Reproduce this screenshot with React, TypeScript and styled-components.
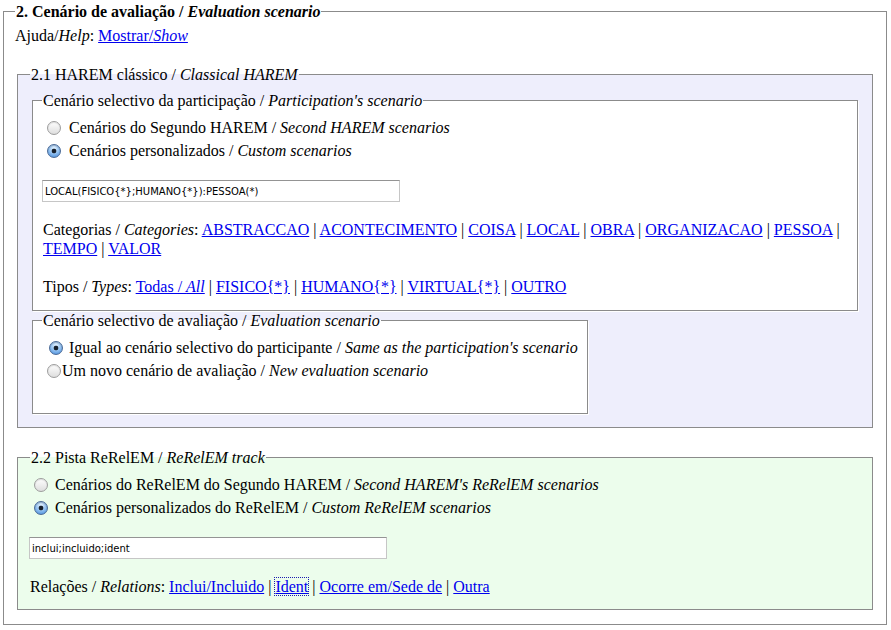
import React from 'react';
import styled, { createGlobalStyle, css } from 'styled-components';

const GlobalStyle = createGlobalStyle`
  html, body { margin: 0; padding: 0; background: #ffffff; }
  body {
    font-family: "Liberation Serif", "Times New Roman", serif;
    font-size: 16px;
    line-height: 19px;
    color: #000;
  }
`;

const BaseFieldset = styled.fieldset`
  margin: 0 2px;
  border: 1px solid #8b8b8b;
  box-shadow: 1px 1px 0 #ffffff;
  min-width: 0;
`;

const OuterFieldset = styled(BaseFieldset)`
  margin: 2px 4px 0 3px;
  padding: 5px 11px 14px 11px;
  background: #ffffff;
`;

const SectionFieldset = styled(BaseFieldset)<{ $bg: string }>`
  margin-top: 20px;
  padding: 6px 12px 13px 12px;
  background: ${(p) => p.$bg};
`;

const ScenarioFieldset = styled(BaseFieldset)<{ $fit?: boolean; $bottom: number }>`
  padding: 6px 9px ${(p) => p.$bottom}px 9px;
  background: #ffffff;
  &:first-of-type {
    margin-top: 1px;
  }
  ${(p) =>
    p.$fit &&
    css`
      width: fit-content;
    `}
`;

const Caption = styled.legend<{ $bold?: boolean }>`
  padding: 0 1px;
  font-weight: ${(p) => (p.$bold ? 700 : 400)};
  white-space: nowrap;
`;

const Em = styled.i`
  font-style: italic;
`;

const HelpLine = styled.div`
  margin: 0;
`;

const Link = styled.a<{ $focused?: boolean }>`
  color: #0000ee;
  text-decoration: underline;
  ${(p) =>
    p.$focused &&
    css`
      outline: 1px dotted #1c1cb0;
      outline-offset: 0;
    `}
`;

const Choice = styled.label`
  display: flex;
  align-items: center;
  height: 23px;
  white-space: nowrap;
`;

const Radio = styled.input.attrs({ type: 'radio' })<{ $ml?: number; $mr?: number }>`
  appearance: none;
  -webkit-appearance: none;
  box-sizing: border-box;
  flex: none;
  width: 14px;
  height: 14px;
  margin: 1px ${(p) => p.$mr ?? 7}px 0 ${(p) => p.$ml ?? 5}px;
  border-radius: 50%;
  border: 1px solid #9d9d9d;
  background: linear-gradient(#fefefe, #dedede);
  box-shadow: inset 0 1px 1px rgba(0, 0, 0, 0.12);
  &:checked {
    border-color: #4a6a97;
    background:
      radial-gradient(circle at 50% 50%, #17202c 0 2px, transparent 2.7px),
      radial-gradient(circle at 50% 25%, #e2f1ff 0, #9cc8f4 45%, #3f86d8 100%);
    box-shadow: inset 0 1px 1px rgba(0, 0, 0, 0.2);
  }
`;

const TextField = styled.input.attrs({ type: 'text' })<{ $left?: number }>`
  display: block;
  box-sizing: border-box;
  width: 358px;
  height: 22px;
  margin: 18px 0 0 ${(p) => p.$left ?? 0}px;
  padding: 0 2px;
  border: 1px solid #c6c6c6;
  border-top-color: #949494;
  background: #ffffff;
  font-family: "DejaVu Sans", "Lucida Grande", sans-serif;
  font-size: 10px;
  color: #000;
  outline: none;
`;

const LinkList = styled.div<{ $top: number; $indent?: number }>`
  margin-top: ${(p) => p.$top}px;
  padding-left: ${(p) => p.$indent ?? 0}px;
  white-space: nowrap;
`;

const categoriesLine1 = ['ABSTRACCAO', 'ACONTECIMENTO', 'COISA', 'LOCAL', 'OBRA', 'ORGANIZACAO', 'PESSOA'];
const categoriesLine2 = ['TEMPO', 'VALOR'];
const types = ['FISICO{*}', 'HUMANO{*}', 'VIRTUAL{*}', 'OUTRO'];

export default function App() {
  return (
    <>
      <GlobalStyle />
      <OuterFieldset>
        <Caption $bold>
          2. Cenário de avaliação / <Em>Evaluation scenario</Em>
        </Caption>
        <HelpLine>
          Ajuda/<Em>Help</Em>:{' '}
          <Link href="#">
            Mostrar/<Em>Show</Em>
          </Link>
        </HelpLine>

        <SectionFieldset $bg="#eeeefc">
          <Caption>
            2.1 HAREM clássico / <Em>Classical HAREM</Em>
          </Caption>

          <ScenarioFieldset $bottom={14}>
            <Caption>
              Cenário selectivo da participação / <Em>Participation's scenario</Em>
            </Caption>
            <Choice>
              <Radio name="part" $mr={8} />
              Cenários do Segundo HAREM /&nbsp;<Em>Second HAREM scenarios</Em>
            </Choice>
            <Choice>
              <Radio name="part" defaultChecked $mr={8} />
              Cenários personalizados /&nbsp;<Em>Custom scenarios</Em>
            </Choice>
            <TextField defaultValue="LOCAL(FISICO{*};HUMANO{*}):PESSOA(*)" />
            <LinkList $top={18} $indent={1}>
              Categorias / <Em>Categories</Em>:{' '}
              {categoriesLine1.map((c) => (
                <React.Fragment key={c}>
                  <Link href="#">{c}</Link> |{' '}
                </React.Fragment>
              ))}
              <br />
              {categoriesLine2.map((c, i) => (
                <React.Fragment key={c}>
                  {i > 0 && ' | '}
                  <Link href="#">{c}</Link>
                </React.Fragment>
              ))}
            </LinkList>
            <LinkList $top={19} $indent={1}>
              Tipos / <Em>Types</Em>:{' '}
              <Link href="#">
                Todas / <Em>All</Em>
              </Link>
              {types.map((t) => (
                <React.Fragment key={t}>
                  {' | '}
                  <Link href="#">{t}</Link>
                </React.Fragment>
              ))}
            </LinkList>
          </ScenarioFieldset>

          <ScenarioFieldset $fit $bottom={31}>
            <Caption>
              Cenário selectivo de avaliação / <Em>Evaluation scenario</Em>
            </Caption>
            <Choice>
              <Radio name="aval" defaultChecked $ml={7} $mr={6} />
              Igual ao cenário selectivo do participante /&nbsp;<Em>Same as the participation's scenario</Em>
            </Choice>
            <Choice>
              <Radio name="aval" $ml={5} $mr={1} />
              Um novo cenário de avaliação /&nbsp;<Em>New evaluation scenario</Em>
            </Choice>
          </ScenarioFieldset>
        </SectionFieldset>

        <SectionFieldset $bg="#ecfdec">
          <Caption>
            2.2 Pista ReRelEM / <Em>ReRelEM track</Em>
          </Caption>
          <Choice>
            <Radio name="rel" $ml={4} />
            Cenários do ReRelEM do Segundo HAREM /&nbsp;<Em>Second HAREM's ReRelEM scenarios</Em>
          </Choice>
          <Choice>
            <Radio name="rel" defaultChecked $ml={4} />
            Cenários personalizados do ReRelEM /&nbsp;<Em>Custom ReRelEM scenarios</Em>
          </Choice>
          <TextField defaultValue="inclui;incluido;ident" $left={-1} />
          <LinkList $top={18}>
            Relações / <Em>Relations</Em>: <Link href="#">Inclui/Incluido</Link> |{' '}
            <Link href="#" $focused>
              Ident
            </Link>{' '}
            | <Link href="#">Ocorre em/Sede de</Link> | <Link href="#">Outra</Link>
          </LinkList>
        </SectionFieldset>
      </OuterFieldset>
    </>
  );
}
